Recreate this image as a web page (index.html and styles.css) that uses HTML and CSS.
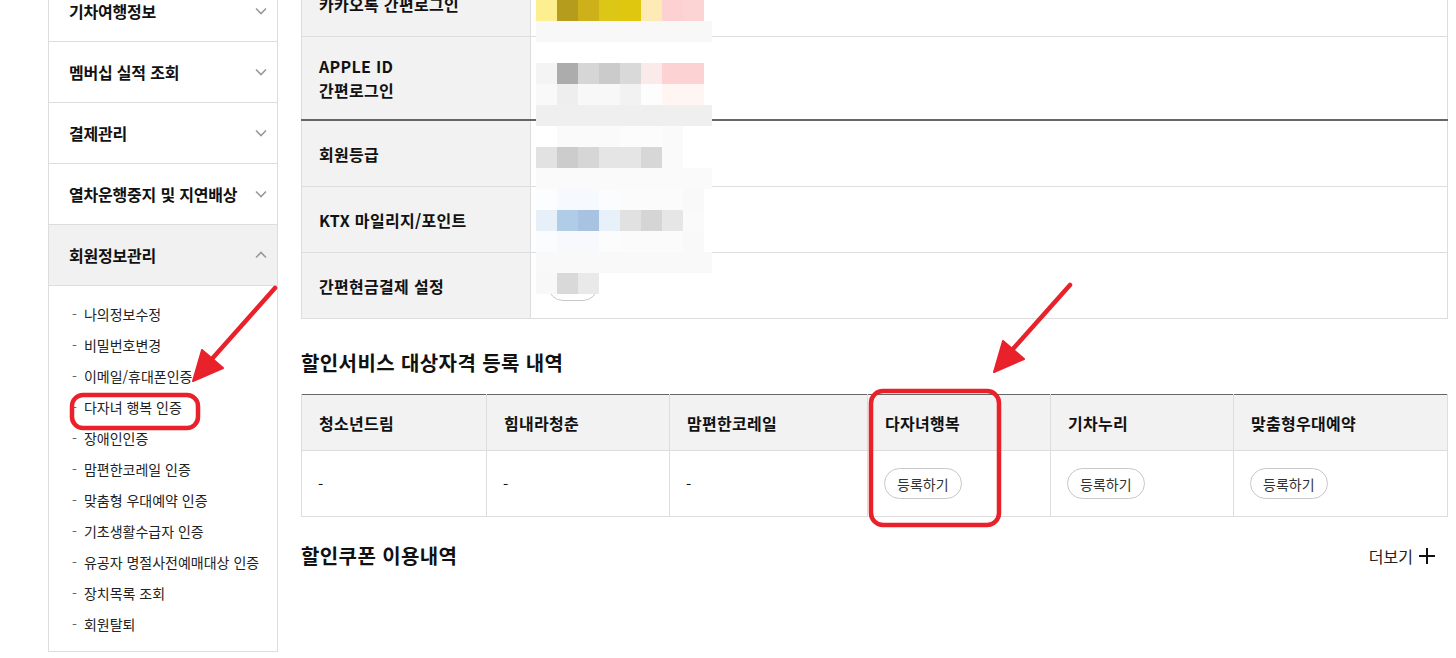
FILE: index.html
```html
<!DOCTYPE html>
<html lang="ko">
<head>
    <meta charset="UTF-8">
    <meta name="viewport" content="width=device-width, initial-scale=1.0">
    <title>회원정보관리</title>
    <link rel="stylesheet" href="styles.css">
</head>
<body>
    <div class="wrap">
        <aside class="side">
            <ul class="side-menu">
                <li class="side-item">
                    <a class="side-link">기차여행정보
                        <svg class="chev" width="12" height="8" viewBox="0 0 12 8"><path d="M1 1.5 6 6.5 11 1.5" /></svg>
                    </a>
                </li>
                <li class="side-item">
                    <a class="side-link">멤버십 실적 조회
                        <svg class="chev" width="12" height="8" viewBox="0 0 12 8"><path d="M1 1.5 6 6.5 11 1.5" /></svg>
                    </a>
                </li>
                <li class="side-item">
                    <a class="side-link">결제관리
                        <svg class="chev" width="12" height="8" viewBox="0 0 12 8"><path d="M1 1.5 6 6.5 11 1.5" /></svg>
                    </a>
                </li>
                <li class="side-item">
                    <a class="side-link">열차운행중지 및 지연배상
                        <svg class="chev" width="12" height="8" viewBox="0 0 12 8"><path d="M1 1.5 6 6.5 11 1.5" /></svg>
                    </a>
                </li>
                <li class="side-item open">
                    <a class="side-link">회원정보관리
                        <svg class="chev" width="12" height="8" viewBox="0 0 12 8"><path d="M1 6.5 6 1.5 11 6.5" /></svg>
                    </a>
                    <ul class="side-sub">
                        <li>나의정보수정</li>
                        <li>비밀번호변경</li>
                        <li>이메일/휴대폰인증</li>
                        <li>다자녀 행복 인증</li>
                        <li>장애인인증</li>
                        <li>맘편한코레일 인증</li>
                        <li>맞춤형 우대예약 인증</li>
                        <li>기초생활수급자 인증</li>
                        <li>유공자 명절사전예매대상 인증</li>
                        <li>장치목록 조회</li>
                        <li>회원탈퇴</li>
                    </ul>
                </li>
            </ul>
        </aside>

        <main class="content">
            <table class="info">
                <tr class="row-one">
                    <th>카카오톡 간편로그인</th>
                    <td></td>
                </tr>
                <tr class="row-two">
                    <th>APPLE ID<br>간편로그인</th>
                    <td></td>
                </tr>
            </table>
            <table class="info info-grade">
                <tr>
                    <th>회원등급</th>
                    <td></td>
                </tr>
                <tr>
                    <th>KTX 마일리지/포인트</th>
                    <td></td>
                </tr>
                <tr>
                    <th>간편현금결제 설정</th>
                    <td><button class="pill pill-sm">설정</button></td>
                </tr>
            </table>

            <h2 class="sec-title">할인서비스 대상자격 등록 내역</h2>
            <table class="disc">
                <colgroup>
                    <col class="c1"><col class="c2"><col class="c3"><col class="c4"><col class="c5"><col>
                </colgroup>
                <tr>
                    <th>청소년드림</th>
                    <th>힘내라청춘</th>
                    <th>맘편한코레일</th>
                    <th>다자녀행복</th>
                    <th>기차누리</th>
                    <th>맞춤형우대예약</th>
                </tr>
                <tr>
                    <td>-</td>
                    <td>-</td>
                    <td>-</td>
                    <td><button class="pill">등록하기</button></td>
                    <td><button class="pill">등록하기</button></td>
                    <td><button class="pill">등록하기</button></td>
                </tr>
            </table>

            <div class="sec-head">
                <h2 class="sec-title">할인쿠폰 이용내역</h2>
                <a class="more">더보기
                    <svg width="18" height="18" viewBox="0 0 18 18"><path d="M9 1v16M1 9h16" /></svg>
                </a>
            </div>
        </main>
    </div>

    <!-- blurred personal data -->
    <div class="mosaic">
        <div class="mrow"><span style="background:#fdee8f"></span><span style="background:#b59c1c"></span><span style="background:#cdb01a"></span><span style="background:#dcc616"></span><span style="background:#dfc70f"></span><span style="background:#fdeab5"></span><span style="background:#fdd1d1"></span><span style="background:#fdd4d4"></span></div>
        <div class="mrow strip" style="background:#f8f8f8"></div>
        <div class="mrow"></div>
        <div class="mrow"><span style="background:#f4f4f4"></span><span style="background:#acacac"></span><span style="background:#d6d6d6"></span><span style="background:#cbcbcb"></span><span style="background:#d9d9d9"></span><span style="background:#fbeaea"></span><span style="background:#fcd2d2"></span><span style="background:#fcd2d2"></span></div>
        <div class="mrow"><span style="background:#f9f9f9"></span><span style="background:#eeeeee"></span><span style="background:#f8f8f8"></span><span style="background:#f8f8f8"></span><span style="background:#f2f2f2"></span><span style="background:#fdfdfd"></span><span style="background:#fff5f3"></span><span style="background:#fff5f3"></span></div>
        <div class="mrow strip" style="background:#efefef"></div>
        <div class="mrow"><span style="background:#fff"></span><span style="background:#fafafa"></span><span style="background:#fafafa"></span><span style="background:#fafafa"></span><span style="background:#fcfcfc"></span><span style="background:#fcfcfc"></span><span style="background:#fafafa"></span><span style="background:#fff"></span></div>
        <div class="mrow"><span style="background:#e2e2e2"></span><span style="background:#cccccc"></span><span style="background:#d6d6d6"></span><span style="background:#e5e5e5"></span><span style="background:#e5e5e5"></span><span style="background:#d7d7d7"></span><span style="background:#fafafa"></span></div>
        <div class="mrow strip" style="background:#fafafa"></div>
        <div class="mrow"><span style="background:#fcfdfe"></span><span style="background:#f6fafe"></span><span style="background:#f6fafe"></span><span style="background:#fbfcfe"></span><span style="background:#fbfbfb"></span><span style="background:#fbfbfb"></span><span style="background:#fbfbfb"></span><span style="background:#f9f9f9"></span></div>
        <div class="mrow"><span style="background:#e7f0f9"></span><span style="background:#b0cde7"></span><span style="background:#a8c3e1"></span><span style="background:#e8f0f9"></span><span style="background:#e2e1e1"></span><span style="background:#d5d5d5"></span><span style="background:#e6e6e6"></span><span style="background:#fafafa"></span></div>
        <div class="mrow"><span style="background:#fbfcfe"></span><span style="background:#f7f9fd"></span><span style="background:#f7f9fd"></span><span style="background:#fcfcfc"></span><span style="background:#fbfbfb"></span><span style="background:#fbfbfb"></span><span style="background:#fbfbfb"></span><span style="background:#f9f9f9"></span></div>
        <div class="mrow strip" style="background:#f9f9f9"></div>
        <div class="mrow"><span style="background:#f8f8f8"></span><span style="background:#d9d9d9"></span><span style="background:#e9e9e9"></span></div>
    </div>

    <!-- red annotations -->
    <svg class="marks" width="1456" height="658" viewBox="0 0 1456 658">
        <g class="mark-line">
            <path d="M275 288 L211 360" />
            <path d="M1070 285 L1012 350" />
            <rect x="72" y="395" width="126" height="33" rx="11" />
            <rect x="871" y="391" width="128" height="134" rx="12" />
        </g>
        <g class="mark-fill">
            <polygon points="193,381 202,350 223,368" />
            <polygon points="994,372 1003,341 1024,359" />
        </g>
    </svg>
</body>
</html>
```

FILE: styles.css
```css
body {
    margin: 0;
    font-family: "Noto Sans CJK KR", "Noto Sans", sans-serif;
    color: #111;
    background: #fff;
}

ul {
    list-style: none;
    margin: 0;
    padding: 0;
}

.wrap {
    display: flex;
    gap: 23px;
    margin-top: -28px;
    padding-left: 48px;
}

/* left menu */
.side {
    width: 230px;
    flex-shrink: 0;
    margin-top: 9px;
    box-sizing: border-box;
    border-left: 1px solid #ddd;
    border-right: 1px solid #ddd;
}

.side-link {
    display: flex;
    align-items: center;
    justify-content: space-between;
    height: 60px;
    padding: 0 10px 0 20px;
    border-bottom: 1px solid #ddd;
    font-size: 16px;
    font-weight: 700;
    letter-spacing: -0.2px;
}

.side-item.open .side-link {
    background-color: #f1f1f1;
}

.chev path {
    fill: none;
    stroke: #999;
    stroke-width: 1.6;
}

.side-sub {
    padding: 13px 0 11px 23px;
    border-bottom: 1px solid #ddd;
}

.side-sub li {
    line-height: 31px;
    font-size: 14px;
    color: #222;
}

.side-sub li::before {
    content: "-";
    color: #666;
    margin-right: 7px;
}

/* main */
.content {
    width: 1147px;
    flex-shrink: 0;
}

.info {
    width: 100%;
    border-collapse: collapse;
}

.info th {
    width: 229px;
    box-sizing: border-box;
    padding: 0 17px;
    background-color: #f2f2f2;
    text-align: left;
    font-size: 16px;
    font-weight: 700;
    line-height: 24px;
    letter-spacing: 0.3px;
    border: 1px solid #ddd;
    border-top: none;
}

.info td {
    padding: 0 17px;
    border: 1px solid #ddd;
    border-top: none;
}

.info .row-one th,
.info .row-one td {
    height: 64px;
}

.info .row-two th,
.info .row-two td {
    height: 82px;
    border-bottom: none;
}

.info-grade {
    border-top: 2px solid #666;
}

.info-grade th,
.info-grade td {
    height: 65px;
}

.sec-title {
    margin: 30px 0 17px;
    font-size: 20px;
    line-height: 28px;
    font-weight: 700;
    letter-spacing: 0.4px;
}

.disc {
    width: 100%;
    border-collapse: collapse;
    table-layout: fixed;
    border-top: 1px solid #666;
}

.disc .c1 { width: 185px; }
.disc .c2 { width: 183px; }
.disc .c3 { width: 198px; }
.disc .c4 { width: 183px; }
.disc .c5 { width: 183px; }

.disc th {
    height: 55px;
    padding: 0 17px;
    background-color: #f2f2f2;
    text-align: left;
    font-size: 16px;
    font-weight: 700;
    letter-spacing: 0.3px;
    border: 1px solid #ddd;
    border-top: none;
}

.disc td {
    height: 65px;
    padding: 0 16px;
    font-size: 15px;
    border: 1px solid #ddd;
}

.pill {
    height: 31px;
    padding: 0 12px;
    border: 1px solid #c8c8c8;
    border-radius: 16px;
    background: #fff;
    font-family: inherit;
    font-size: 14px;
    white-space: nowrap;
    color: #333;
}

.pill-sm {
    height: 30px;
    width: 50px;
    padding: 0;
}

.sec-head {
    display: flex;
    align-items: center;
    justify-content: space-between;
    margin-top: 25px;
}

.sec-head .sec-title {
    margin: 0;
}

.more {
    display: flex;
    align-items: center;
    gap: 5px;
    margin-right: 12px;
    font-size: 16px;
    color: #222;
}

.more path {
    stroke: #111;
    stroke-width: 2;
}

/* overlays */
.mosaic {
    position: absolute;
    left: 536px;
    top: 0;
    width: 176px;
}

.mrow {
    display: flex;
    height: 21px;
}

.mrow span {
    width: 21px;
    height: 21px;
}

.marks {
    position: absolute;
    left: 0;
    top: 0;
    pointer-events: none;
}

.mark-line path,
.mark-line rect {
    fill: none;
    stroke: #e8212b;
    stroke-width: 4.5;
    stroke-linecap: round;
}

.mark-fill polygon {
    fill: #e8212b;
    stroke: #e8212b;
    stroke-width: 2;
    stroke-linejoin: round;
}
```
